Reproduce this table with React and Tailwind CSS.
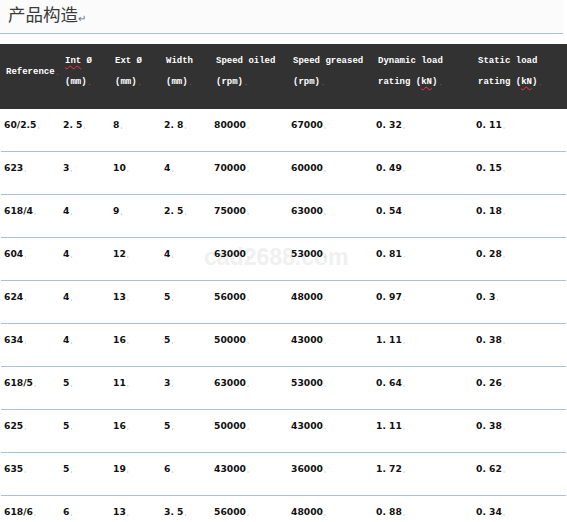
import React from "react";

const cols = "grid grid-cols-[58px_50px_51px_50px_77px_85px_100px_96px]";

const rows = [
  ["60/2.5", "2. 5", "8", "2. 8", "80000", "67000", "0. 32", "0. 11"],
  ["623", "3", "10", "4", "70000", "60000", "0. 49", "0. 15"],
  ["618/4", "4", "9", "2. 5", "75000", "63000", "0. 54", "0. 18"],
  ["604", "4", "12", "4", "63000", "53000", "0. 81", "0. 28"],
  ["624", "4", "13", "5", "56000", "48000", "0. 97", "0. 3"],
  ["634", "4", "16", "5", "50000", "43000", "1. 11", "0. 38"],
  ["618/5", "5", "11", "3", "63000", "53000", "0. 64", "0. 26"],
  ["625", "5", "16", "5", "50000", "43000", "1. 11", "0. 38"],
  ["635", "5", "19", "6", "43000", "36000", "1. 72", "0. 62"],
  ["618/6", "6", "13", "3. 5", "56000", "48000", "0. 88", "0. 34"],
];

const Mark = () => (
  <span className="ml-px text-[7px] font-normal text-gray-400 align-baseline">ˌ</span>
);

const Squig = ({ children }) => (
  <span className="underline decoration-wavy decoration-red-500 decoration-1 underline-offset-2">
    {children}
  </span>
);

const headers = [
  [<Squig key="i">Int</Squig>, " Ø"],
  ["Ext Ø"],
  ["Width"],
  ["Speed oiled"],
  ["Speed greased"],
  ["Dynamic load"],
  ["Static load"],
];

const second = [
  "(mm)",
  "(mm)",
  "(mm)",
  "(rpm)",
  "(rpm)",
  <>rating (<Squig>kN</Squig>)</>,
  <>rating (<Squig>kN</Squig>)</>,
];

export default function App() {
  return (
    <div className="relative w-[567px] h-[522px] overflow-hidden bg-white">
      <div className="w-[563px] h-[34px] bg-[#fbfbfb] border-b border-[#a9c0de] pl-[8px] pt-[1px] flex items-start">
        <span className="text-[17.5px] text-[#3a3a3a] leading-[26px]" style={{ fontFamily: '"Noto Sans CJK SC", sans-serif' }}>
          产品构造
        </span>
        <span className="text-[10px] text-gray-500 mt-[10px]">↵</span>
      </div>

      <div className="mt-[10px] h-[65px] bg-[#323232] text-white font-bold text-[9px]" style={{ fontFamily: '"Liberation Mono", monospace' }}>
        <div className={`${cols} h-full`}>
          <div className="pl-[6px] flex items-center pb-[8px]">
            <span>Reference</span>
            <Mark />
          </div>
          {headers.map((h, i) => (
            <div key={i} className="pl-[7px] pt-[7px] leading-[21px]">
              <div className="whitespace-pre">{h}</div>
              <div className="whitespace-pre">
                {second[i]}
                <Mark />
              </div>
            </div>
          ))}
        </div>
      </div>

      <div
        className="absolute left-[204px] top-[240px] text-[23px] font-bold text-[#f0f0f0] pointer-events-none"
        style={{ fontFamily: '"Liberation Sans", sans-serif' }}
      >
        cad2688.com
      </div>

      <div className="relative font-bold text-[9.2px] text-[#111]" style={{ fontFamily: '"DejaVu Sans", sans-serif' }}>
        {rows.map((r, i) => (
          <div key={i} className={`${cols} h-[43px] border-b border-[#a9c0de] mx-px`}>
            {r.map((c, j) => (
              <div key={j} className={`${j === 0 ? "pl-[3px]" : "pl-[4px]"} pt-[9px] whitespace-pre`}>
                {c}
                <Mark />
              </div>
            ))}
          </div>
        ))}
      </div>
    </div>
  );
}
